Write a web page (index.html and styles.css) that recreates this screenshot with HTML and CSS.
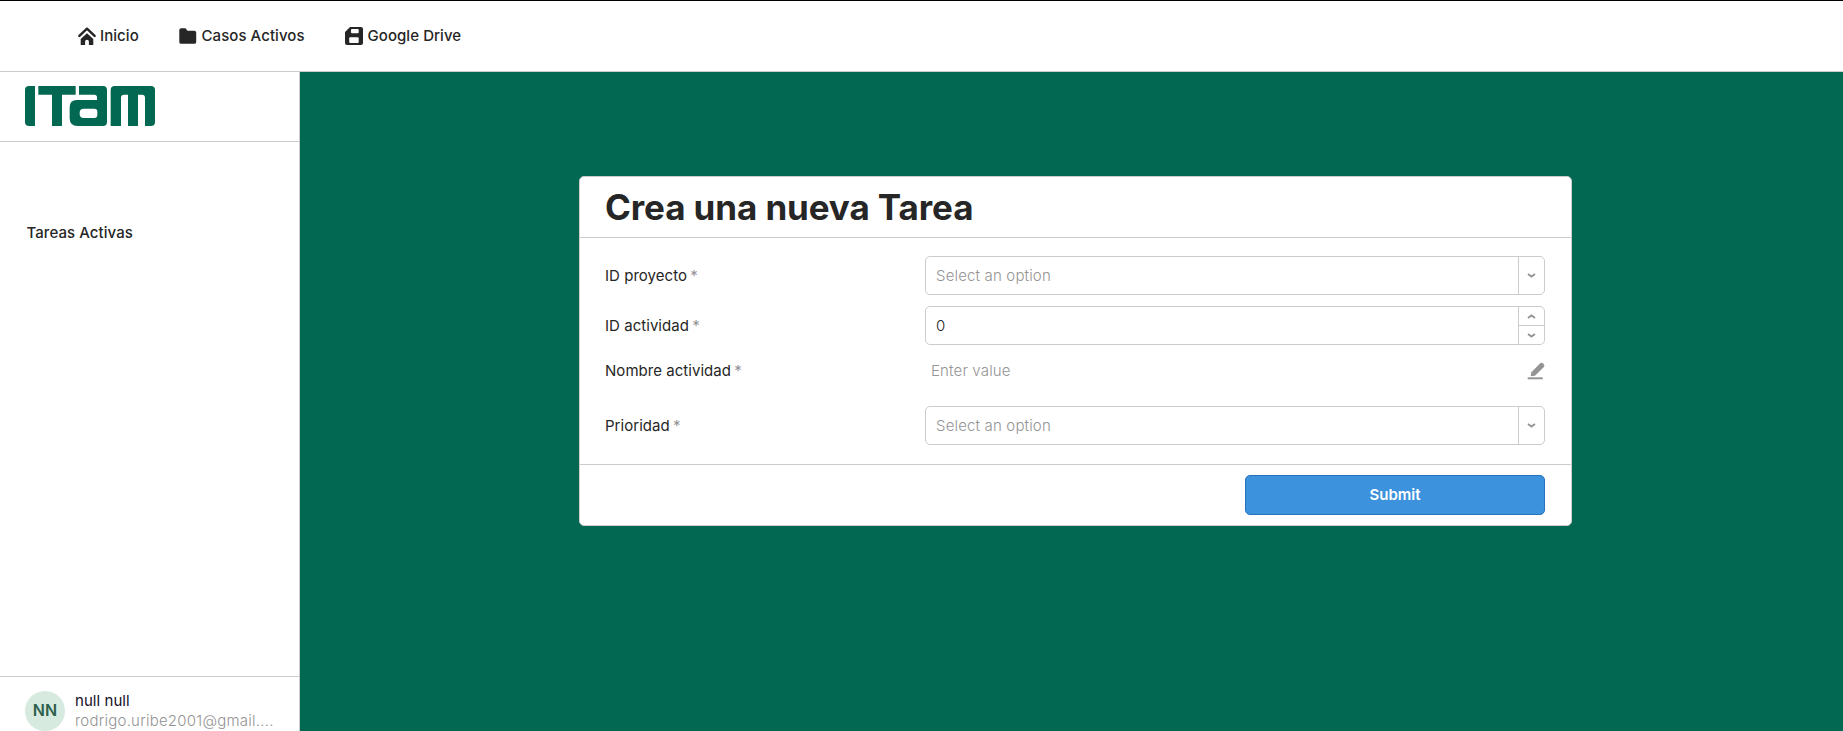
FILE: index.html
```html
<!DOCTYPE html>
<html lang="es">
<head>
<meta charset="utf-8">
<title>Tareas</title>
<link rel="stylesheet" href="styles.css">
</head>
<body>
<header class="topbar">
  <a class="nav nav-home"><svg width="18" height="18" viewBox="0 0 18 18"><path d="M1.4 8.9 9 1.7l7.6 7.2" fill="none" stroke="#262626" stroke-width="2.4" stroke-linecap="round" stroke-linejoin="round"/><path d="M9 6.3 15.3 12v6h-4.4v-3.3a1.9 1.9 0 0 0-3.8 0V18H2.7v-6z" fill="#262626"/></svg><span>Inicio</span></a>
  <a class="nav nav-cases"><svg width="18" height="18" viewBox="0 0 18 18"><path d="M2.2 1.3h4.3l2 2.4h6.8A1.9 1.9 0 0 1 17.2 5.600v9.300a1.900 1.900 0 0 1-1.900 1.900H2.200A1.900 1.900 0 0 1 .3 14.900V3.200a1.900 1.900 0 0 1 1.900-1.900z" fill="#262626"/></svg><span>Casos Activos</span></a>
  <a class="nav nav-drive"><svg width="18" height="18" viewBox="0 0 18 18"><path fill-rule="evenodd" d="M5 0h11a2 2 0 0 1 2 2v14a2 2 0 0 1-2 2H2a2 2 0 0 1-2-2V5zM7 2a1 1 0 0 0-1 1v2.200a1 1 0 0 0 1 1h5.700a1 1 0 0 0 1-1V3a1 1 0 0 0-1-1zM5.200 10.300a1 1 0 0 0-1 1v3.700a1 1 0 0 0 1 1h7.500a1 1 0 0 0 1-1v-3.700a1 1 0 0 0-1-1z" fill="#262626"/></svg><span>Google Drive</span></a>
</header>
<div class="shell">
  <aside class="sidebar">
    <div class="brand">
      <svg width="130" height="40" viewBox="0 0 390 120" fill="#026851" role="img" aria-label="ITAM"><path d="M12 0h18v120H12q-12 0-12-12V12Q0 0 12 0z"/><path d="M40 0h112v26h-41v94H81V26H40z"/><path fill-rule="evenodd" d="M162 0h72q12 0 12 12v96q0 12-12 12h-76q-24 0-24-24V64q0-22 22-22h60V34q0-8-8-8h-46zM176 68q-12 0-12 12v4q0 12 12 12h32q9 0 9-9V77q0-9-9-9z"/><path d="M269 0h109q12 0 12 12v96q0 12-12 12h-18V35q0-9-9-9h-12v94h-30V26h-12q-9 0-9 9v85h-31V12q0-12 12-12z"/></svg>
    </div>
    <nav class="menu"><a>Tareas Activas</a></nav>
    <div class="user">
      <div class="avatar">NN</div>
      <div class="who"><div class="name">null null</div><div class="mail">rodrigo.uribe2001@gmail....</div></div>
    </div>
  </aside>
  <main class="canvas">
    <section class="card">
      <h1 class="card-title">Crea una nueva Tarea</h1>
      <div class="fields">
        <div class="row"><label>ID proyecto <i>*</i></label><div class="box"><span class="hint">Select an option</span><span class="arrow"><svg width="9" height="5" viewBox="0 0 9 5"><path d="M1 1l3.500 2.500L8 1"/></svg></span></div></div>
        <div class="row"><label>ID actividad <i>*</i></label><div class="box"><span class="value">0</span><span class="steps"><span><svg width="9" height="5" viewBox="0 0 9 5"><path d="M1 4l3.500-2.500L8 4"/></svg></span><span><svg width="9" height="5" viewBox="0 0 9 5"><path d="M1 1l3.500 2.500L8 1"/></svg></span></span></div></div>
        <div class="row row-text"><label>Nombre actividad <i>*</i></label><div class="inline"><span class="hint">Enter value</span><svg class="pen" width="18" height="18" viewBox="0 0 18 18"><path d="M4.400 10.200 12.700 1.700a2.500 2.500 0 0 1 3.700 3.700L8 13.800l-4.400.4z" fill="#949494"/><path d="M.7 16.300h15" stroke="#949494" stroke-width="2"/></svg></div></div>
        <div class="row"><label>Prioridad <i>*</i></label><div class="box"><span class="hint">Select an option</span><span class="arrow"><svg width="9" height="5" viewBox="0 0 9 5"><path d="M1 1l3.500 2.500L8 1"/></svg></span></div></div>
      </div>
      <div class="card-foot"><button class="submit">Submit</button></div>
    </section>
  </main>
</div>
</body>
</html>
```
FILE: styles.css
```css
* { box-sizing: border-box; }
body { margin: 0; height: 731px; overflow: hidden; display: flex; flex-direction: column; font: 15px/20px Inter, sans-serif; color: #262626; background: #fff; }
.topbar { height: 72px; flex: none; display: flex; align-items: center; padding-left: 78px; border-top: 1px solid #000; border-bottom: 1px solid #ccc; font-weight: 500; letter-spacing: .06px; }
.nav { display: flex; align-items: center; gap: 4.5px; white-space: nowrap; }
.nav svg { flex: none; }
.nav-home { width: 101px; gap: 4px; }
.nav-cases { width: 166px; }
.shell { flex: 1; min-height: 0; display: flex; }
.sidebar { width: 300px; flex: none; display: flex; flex-direction: column; border-right: 1px solid #ccc; }
.brand { height: 70px; padding: 14px 0 0 25px; border-bottom: 1px solid #ccc; }
.brand svg { display: block; }
.menu { flex: 1; padding: 81px 0 0 26.5px; font-weight: 500; letter-spacing: .07px; }
.user { height: 55px; display: flex; gap: 10px; padding: 14px 0 0 25px; border-top: 1px solid #ccc; }
.avatar { flex: none; width: 40px; height: 40px; border-radius: 50%; background: #d6eadf; color: #2d5f4c; font-weight: 600; font-size: 16px; line-height: 38px; text-align: center; }
.name { color: #120f26; letter-spacing: .05px; }
.mail { color: #949494; font-weight: 300; letter-spacing: .23px; white-space: nowrap; }
.canvas { flex: 1; background: #026851; padding: 104px 0 0 279px; }
.card { width: 992.5px; height: 350px; background: #fff; border: 1px solid #ccc; border-radius: 5px; }
.card-title { margin: 0; height: 61px; padding-left: 25px; border-bottom: 1px solid #ccc; font-size: 35px; line-height: 60px; font-weight: 700; letter-spacing: -.1px; }
.fields { height: 226px; padding: 18px 25.5px 0 25px; display: flex; flex-direction: column; gap: 11px; }
.row { display: flex; align-items: center; height: 39px; }
.row-text { height: 29px; margin-bottom: 11px; }
.row label { width: 320px; flex: none; letter-spacing: .04px; }
.row-text + .row { margin-top: -1px; }
.row i { font-style: normal; color: #949494; margin-left: -1px; }
.box { flex: 1; height: 39px; display: flex; align-items: center; padding-left: 10px; border: 1px solid #ccc; border-radius: 5px; }
.hint { flex: 1; color: #949494; font-weight: 300; letter-spacing: .16px; }
.value { flex: 1; font-weight: 300; }
.arrow, .steps { width: 26px; height: 37px; border-left: 1px solid #ccc; display: flex; align-items: center; justify-content: center; }
.box svg { fill: none; stroke: #949494; stroke-width: 1.9; }
.steps { flex-direction: column; }
.steps span { width: 100%; flex: 1; display: flex; align-items: center; justify-content: center; }
.steps span + span { border-top: 1px solid #ccc; }
.inline { flex: 1; display: flex; align-items: center; padding-left: 6px; }
.card-foot { height: 61px; padding: 10px 25.5px 0; border-top: 1px solid #ccc; display: flex; justify-content: flex-end; }
.submit { width: 300px; height: 40px; border: 1px solid #2770bd; border-radius: 5px; background: #3c92dc; color: #fff; font: 600 15px/20px Inter, sans-serif; padding: 0; }
```
